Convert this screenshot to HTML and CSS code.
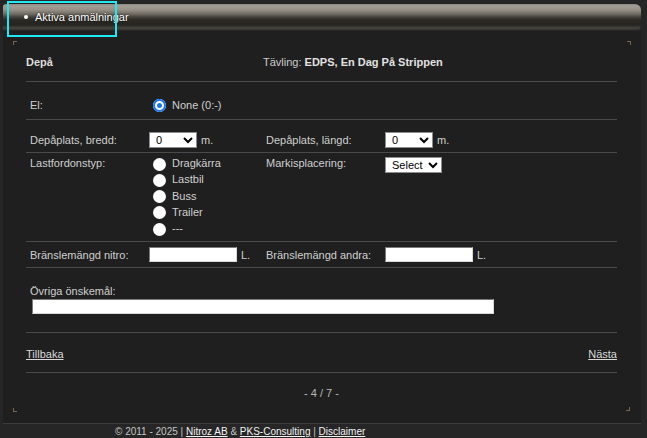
FILE: index.html
```html
<!DOCTYPE html>
<html lang="sv">
<head>
    <meta charset="UTF-8">
    <title>Depå - Anmälan</title>
    <link rel="stylesheet" href="styles.css">
</head>
<body>
    <div class="topbar">
        <ul class="tabs">
            <li class="tab-active">Aktiva anmälningar</li>
        </ul>
        <div class="highlight"></div>
    </div>

    <div class="panel">
        <span class="corner tl"></span>
        <span class="corner tr"></span>
        <span class="corner bl"></span>
        <span class="corner br"></span>

        <div class="head">
            <span class="title">Depå</span>
            <span class="comp">Tävling: <b>EDPS, En Dag På Strippen</b></span>
        </div>

        <div class="row row-el">
            <div class="lbl">El:</div>
            <div class="ctl wide">
                <label class="opt"><input type="radio" name="el" checked> None (0:-)</label>
            </div>
        </div>

        <div class="row row-size">
            <div class="lbl">Depåplats, bredd:</div>
            <div class="ctl"><select class="sel"><option>0</option></select> <span class="unit">m.</span></div>
            <div class="lbl2">Depåplats, längd:</div>
            <div class="ctl"><select class="sel"><option>0</option></select> <span class="unit">m.</span></div>
        </div>

        <div class="row row-type">
            <div class="lbl">Lastfordonstyp:</div>
            <div class="ctl">
                <ul class="radios">
                    <li><label class="opt"><input type="radio" name="typ"> Dragkärra</label></li>
                    <li><label class="opt"><input type="radio" name="typ"> Lastbil</label></li>
                    <li><label class="opt"><input type="radio" name="typ"> Buss</label></li>
                    <li><label class="opt"><input type="radio" name="typ"> Trailer</label></li>
                    <li><label class="opt"><input type="radio" name="typ"> ---</label></li>
                </ul>
            </div>
            <div class="lbl2">Markisplacering:</div>
            <div class="ctl"><select class="sel sel-wide"><option>Select</option></select></div>
        </div>

        <div class="row row-fuel">
            <div class="lbl">Bränslemängd nitro:</div>
            <div class="ctl"><input type="text" class="txt"> <span class="unit">L.</span></div>
            <div class="lbl2">Bränslemängd andra:</div>
            <div class="ctl"><input type="text" class="txt"> <span class="unit">L.</span></div>
        </div>

        <div class="wishes">
            <div class="lbl">Övriga önskemål:</div>
            <input type="text" class="txt txt-long">
        </div>

        <div class="nav">
            <a href="#">Tillbaka</a>
            <a href="#">Nästa</a>
        </div>

        <div class="pager">- 4 / 7 -</div>
    </div>

    <div class="footer">
        &copy; 2011 - 2025 | <a href="#">Nitroz AB</a> &amp; <a href="#">PKS-Consulting</a> | <a href="#">Disclaimer</a>
    </div>
</body>
</html>
```

FILE: styles.css
```css
body {
    margin: 0;
    background: #262626;
    font-family: "Liberation Sans", Arial, sans-serif;
    font-size: 11px;
    color: #cfcfcf;
}

/* top tab bar */
.topbar {
    position: relative;
    z-index: 2;
    margin: 0 6px 0 3px;
    padding-top: 4px;
    height: 27px;
}
.tabs {
    margin: 0;
    height: 27px;
    padding: 0 0 0 21px;
    border-radius: 3px 6px 6px 3px;
    background: linear-gradient(to bottom,
        #8a867e 0, #a39f96 2px, #958f86 6px, #6f6b62 10px, #45423c 13px,
        #2a2924 16px, #262520 21px, #3a3833 23px, #4a4740 24px, #2e2d29 26px, #252422 27px);
    list-style: none;
}
.tabs li {
    display: flex;
    align-items: center;
    height: 26px;
    color: #fff;
    text-shadow: 0 0 2px #000;
}
.tabs li::before {
    content: "";
    width: 4px;
    height: 4px;
    border-radius: 50%;
    background: #fff;
    margin-right: 7px;
}
.highlight {
    position: absolute;
    left: 4px;
    top: 1px;
    width: 106px;
    height: 32px;
    border: 2px solid #22e6f2;
}

/* main panel */
.panel {
    position: relative;
    margin: 0 6px 0 3px;
    padding: 0 24px 0 23px;
    background: #1f1f1f;
    height: 392px;
    border-bottom: 1px solid #3d3d3d;
}
.corner {
    position: absolute;
    width: 3px;
    height: 3px;
    border: 0 solid #7a6650;
}
.tl { left: 10px; top: 10px; border-width: 1px 0 0 1px; }
.tr { right: 10px; top: 10px; border-width: 1px 1px 0 0; }
.bl { left: 10px; bottom: 11px; border-width: 0 0 1px 1px; }
.br { right: 11px; bottom: 12px; border-width: 0 1px 1px 0; }

.head {
    display: flex;
    align-items: center;
    height: 51px;
    padding-top: 12px;
    box-sizing: border-box;
    border-bottom: 1px solid #4a4a4a;
}
.title {
    width: 237px;
    font-weight: bold;
    color: #ddd;
}
.comp { color: #ccc; }
.comp b { color: #e2e2e2; }

.row {
    display: grid;
    grid-template-columns: 123px 117px 119px 1fr;
    box-sizing: border-box;
    border-bottom: 1px solid #4a4a4a;
    line-height: 16px;
}
.lbl { padding-left: 4px; }
.ctl { display: flex; align-items: center; }
.wide { grid-column: span 3; }
.unit { margin-left: 4px; }

.row-el { height: 38px; padding-top: 8px; align-items: center; }
.row-size { height: 33px; padding-top: 8px; align-items: center; }
.row-type { height: 89px; padding-top: 2px; align-items: start; }
.row-fuel { height: 26px; align-items: center; }

.opt { display: flex; align-items: center; }
.opt input {
    appearance: none;
    width: 13px;
    height: 13px;
    margin: 2px 6px 0 4px;
    border-radius: 50%;
    background: #fff;
}
.opt input:checked {
    background: #1a73e8;
    box-shadow: inset 0 0 0 2px #1a73e8, inset 0 0 0 4px #fff;
}
.radios {
    margin: 0;
    padding: 0;
    list-style: none;
}
.radios li { height: 16.25px; }

.sel {
    width: 48px;
    height: 16px;
    margin: 0;
    padding: 0 0 0 2px;
    border: 1px solid #8d8d8d;
    border-radius: 0;
    background: #fff;
    color: #000;
    font-family: "Liberation Sans", Arial, sans-serif;
    font-size: 11px;
}
.sel-wide { width: 57px; margin-top: 2px; }

.txt {
    width: 84px;
    height: 11px;
    margin: 0;
    padding: 1px;
    border: 1px solid;
    border-color: #7a7a7a #d8d8d8 #d8d8d8 #7a7a7a;
    background: #fff;
}
.txt-long {
    display: block;
    width: 458px;
    margin: 1px 0 0 6px;
}

.wishes {
    height: 65px;
    box-sizing: border-box;
    padding-top: 17px;
    line-height: 13px;
    border-bottom: 1px solid #4a4a4a;
}

.nav {
    display: flex;
    justify-content: space-between;
    align-items: center;
    height: 40px;
    box-sizing: border-box;
    border-bottom: 1px solid #4a4a4a;
    padding-top: 2px;
}
.nav a { color: #d8d8d8; }

.pager {
    padding-top: 14px;
    text-align: center;
    color: #b8b8b8;
}

.footer {
    padding: 1px 0 0 115px;
    font-size: 10px;
    color: #c4c4c4;
    line-height: 13px;
}
.footer a { color: #f2f2f2; }
```
